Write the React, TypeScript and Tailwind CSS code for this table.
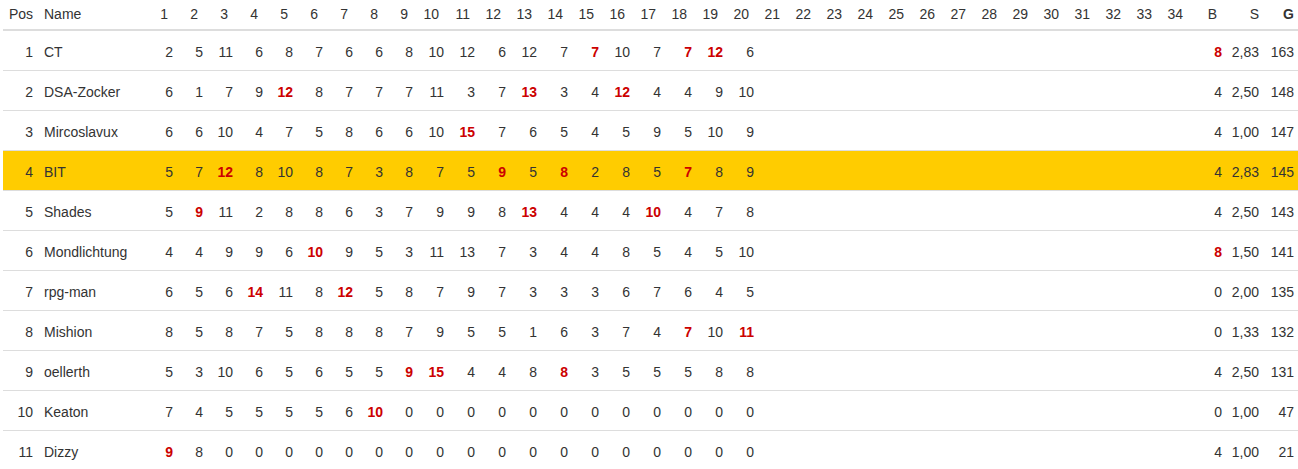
type Cell = number | [number];

type Row = {
  pos: number;
  name: string;
  rounds: Cell[];
  b: Cell;
  s: string;
  g: number;
  highlight?: boolean;
};

// [n] = Bestwert (rot, fett)
const rows: Row[] = [
  { pos: 1, name: "CT", rounds: [2, 5, 11, 6, 8, 7, 6, 6, 8, 10, 12, 6, 12, 7, [7], 10, 7, [7], [12], 6], b: [8], s: "2,83", g: 163 },
  { pos: 2, name: "DSA-Zocker", rounds: [6, 1, 7, 9, [12], 8, 7, 7, 7, 11, 3, 7, [13], 3, 4, [12], 4, 4, 9, 10], b: 4, s: "2,50", g: 148 },
  { pos: 3, name: "Mircoslavux", rounds: [6, 6, 10, 4, 7, 5, 8, 6, 6, 10, [15], 7, 6, 5, 4, 5, 9, 5, 10, 9], b: 4, s: "1,00", g: 147 },
  { pos: 4, name: "BIT", rounds: [5, 7, [12], 8, 10, 8, 7, 3, 8, 7, 5, [9], 5, [8], 2, 8, 5, [7], 8, 9], b: 4, s: "2,83", g: 145, highlight: true },
  { pos: 5, name: "Shades", rounds: [5, [9], 11, 2, 8, 8, 6, 3, 7, 9, 9, 8, [13], 4, 4, 4, [10], 4, 7, 8], b: 4, s: "2,50", g: 143 },
  { pos: 6, name: "Mondlichtung", rounds: [4, 4, 9, 9, 6, [10], 9, 5, 3, 11, 13, 7, 3, 4, 4, 8, 5, 4, 5, 10], b: [8], s: "1,50", g: 141 },
  { pos: 7, name: "rpg-man", rounds: [6, 5, 6, [14], 11, 8, [12], 5, 8, 7, 9, 7, 3, 3, 3, 6, 7, 6, 4, 5], b: 0, s: "2,00", g: 135 },
  { pos: 8, name: "Mishion", rounds: [8, 5, 8, 7, 5, 8, 8, 8, 7, 9, 5, 5, 1, 6, 3, 7, 4, [7], 10, [11]], b: 0, s: "1,33", g: 132 },
  { pos: 9, name: "oellerth", rounds: [5, 3, 10, 6, 5, 6, 5, 5, [9], [15], 4, 4, 8, [8], 3, 5, 5, 5, 8, 8], b: 4, s: "2,50", g: 131 },
  { pos: 10, name: "Keaton", rounds: [7, 4, 5, 5, 5, 5, 6, [10], 0, 0, 0, 0, 0, 0, 0, 0, 0, 0, 0, 0], b: 0, s: "1,00", g: 47 },
  { pos: 11, name: "Dizzy", rounds: [[9], 8, 0, 0, 0, 0, 0, 0, 0, 0, 0, 0, 0, 0, 0, 0, 0, 0, 0, 0], b: 4, s: "1,00", g: 21 },
];

const rounds = Array.from({ length: 34 }, (_, i) => i + 1);

const Value = ({ v }: { v: Cell | undefined }) => {
  if (v === undefined) return null;
  if (Array.isArray(v)) return <span className="font-bold text-[#cc0000]">{v[0]}</span>;
  return <>{v}</>;
};

export default function App() {
  return (
    <div className="bg-white pl-[3px] font-['Liberation_Sans',Arial,sans-serif] text-[14px] leading-5 text-[#333]">
      <table className="w-[1295px] table-fixed border-separate border-spacing-0">
        <colgroup>
          <col className="w-[33px]" />
          <col className="w-[110px]" />
          {rounds.map((r) => (
            <col key={r} className={r < 10 ? "w-[30px]" : "w-[31px]"} />
          ))}
          <col className="w-[34px]" />
          <col className="w-[40px]" />
          <col className="w-[33px]" />
        </colgroup>
        <thead>
          <tr>
            <th className="border-b-2 border-[#ddd] pt-1 pb-[5px] pl-[6px] text-left font-normal">Pos</th>
            <th className="border-b-2 border-[#ddd] pt-1 pb-[5px] pl-2 text-left font-normal">Name</th>
            {rounds.map((r) => (
              <th key={r} className="border-b-2 border-[#ddd] pt-1 pb-[5px] pr-2 text-right font-normal">
                {r}
              </th>
            ))}
            <th className="border-b-2 border-[#ddd] pt-1 pb-[5px] pr-2 text-right font-normal">B</th>
            <th className="border-b-2 border-[#ddd] pt-1 pb-[5px] pr-[6px] text-right font-normal">S</th>
            <th className="border-b-2 border-[#ddd] pt-1 pb-[5px] pr-1 text-right font-bold">G</th>
          </tr>
        </thead>
        <tbody>
          {rows.map((row, idx) => {
            const td = `pt-[11px] pb-2 ${idx > 0 ? "border-t border-[#ddd]" : ""} ${row.highlight ? "bg-[#ffcc00]" : ""}`;
            return (
              <tr key={row.pos}>
                <td className={`${td} pr-[3px] text-right`}>{row.pos}</td>
                <td className={`${td} pl-2 text-left whitespace-nowrap`}>{row.name}</td>
                {rounds.map((r) => (
                  <td key={r} className={`${td} pr-[3px] text-right`}>
                    <Value v={row.rounds[r - 1]} />
                  </td>
                ))}
                <td className={`${td} pr-[3px] text-right`}>
                  <Value v={row.b} />
                </td>
                <td className={`${td} pr-[6px] text-right`}>{row.s}</td>
                <td className={`${td} pr-1 text-right`}>{row.g}</td>
              </tr>
            );
          })}
        </tbody>
      </table>
    </div>
  );
}
